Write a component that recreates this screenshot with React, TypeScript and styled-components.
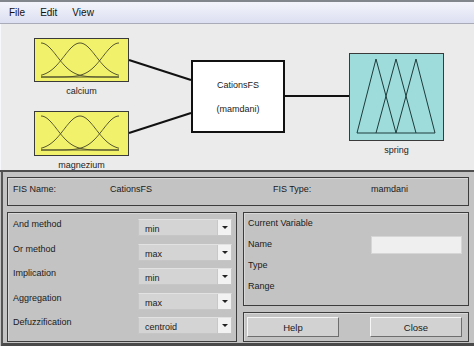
import React from 'react'
import styled, { createGlobalStyle } from 'styled-components'

const GlobalStyle = createGlobalStyle`
  html, body {
    margin: 0;
    padding: 0;
    background: #c3c3c3;
  }
  body {
    font-family: "Liberation Sans", Arial, sans-serif;
    font-size: 9px;
    color: #1a1a1a;
  }
`

const Window = styled.div`
  width: 474px;
  height: 346px;
  display: flex;
  flex-direction: column;
  overflow: hidden;
`

const TopEdge = styled.div`
  height: 2px;
  background: #80868c;
`

const MenuBar = styled.div`
  height: 21px;
  display: flex;
  align-items: center;
  gap: 15px;
  padding-left: 9px;
  font-size: 10px;
  color: #111;
  background: linear-gradient(#f3f4fb, #dcdff1);
  border-bottom: 1px solid #a9acb8;
`

const Canvas = styled.div`
  position: relative;
  height: 146px;
  background: #ebebeb;
  border-left: 1px solid #f7f8fc;
`

const Wires = styled.svg`
  position: absolute;
  inset: 0;
`

const Node = styled.div<{ $x: number; $y: number }>`
  position: absolute;
  left: ${p => p.$x}px;
  top: ${p => p.$y}px;
  display: flex;
  flex-direction: column;
  align-items: center;
  gap: 4px;
`

const VarBox = styled.div<{ $w: number; $h: number; $bg: string }>`
  width: ${p => p.$w}px;
  height: ${p => p.$h}px;
  box-sizing: border-box;
  background: ${p => p.$bg};
  border: 1px solid #3a3a3a;
  display: flex;
`

const VarLabel = styled.span`
  line-height: 10px;
  color: #222;
`

const SystemBox = styled.div`
  position: absolute;
  left: 190px;
  top: 36px;
  width: 94px;
  height: 73px;
  box-sizing: border-box;
  background: #fff;
  border: 2px solid #111;
  display: flex;
  flex-direction: column;
  align-items: center;
  padding-top: 18px;
  gap: 14px;
  line-height: 10px;
`

const Divider = styled.div`
  height: 2px;
  background: #4e4e4e;
`

const Lower = styled.div`
  flex: 1;
  display: flex;
  flex-direction: column;
  gap: 6px;
  padding: 5px 5px 1px 4px;
  border-left: 2px solid #555;
  margin-left: 1px;
  border-bottom: 3px solid #4a4a4a;
  background: #c3c3c3;
  min-height: 0;
`

const Panel = styled.div`
  box-sizing: border-box;
  border: 1px solid #3c3c3c;
  box-shadow: inset 1px 1px 0 #d8d8d8;
`

const InfoPanel = styled(Panel)`
  height: 29px;
  display: grid;
  grid-template-columns: 97px 163px 98px 1fr;
  padding: 6px 0 0 5px;
  line-height: 11px;
`

const Row = styled.div`
  flex: 1;
  display: flex;
  gap: 6px;
  min-height: 0;
`

const MethodsPanel = styled(Panel)`
  width: 230px;
  display: flex;
  flex-direction: column;
  gap: 7.5px;
  padding: 6px 4px 0 5px;
`

const MethodRow = styled.div`
  height: 17px;
  display: flex;
  justify-content: space-between;
  align-items: flex-start;
`

const MethodLabel = styled.span`
  line-height: 11px;
`

const Select = styled.div`
  width: 94px;
  height: 17px;
  box-sizing: border-box;
  display: flex;
  background: #d4d4d4;
  border: 1px solid #c6c6c6;
  border-top-color: #e2e2e2;
`

const SelectValue = styled.span`
  flex: 1;
  padding: 4px 0 0 6px;
  line-height: 10px;
`

const SelectArrow = styled.span`
  width: 13px;
  display: flex;
  align-items: center;
  justify-content: center;
  background: #f2f2f2;
  border-left: 1px solid #c8c8c8;
  &::after {
    content: '';
    border-left: 3px solid transparent;
    border-right: 3px solid transparent;
    border-top: 3px solid #222;
  }
`

const RightColumn = styled.div`
  flex: 1;
  display: flex;
  flex-direction: column;
  gap: 6px;
`

const VariablePanel = styled(Panel)`
  flex: 1;
  display: flex;
  flex-direction: column;
  padding: 5px 6px 0 4px;
  gap: 10px;
`

const VarRow = styled.div`
  height: 11px;
  display: flex;
  justify-content: space-between;
  align-items: center;
  line-height: 11px;
`

const NameInput = styled.div`
  width: 91px;
  height: 18px;
  box-sizing: border-box;
  background: #efefef;
  border: 1px solid #d6d6d6;
`

const ButtonPanel = styled(Panel)`
  height: 30px;
  display: flex;
  justify-content: space-between;
  align-items: center;
  padding: 0 6px 0 3px;
`

const Button = styled.div`
  width: 92px;
  height: 20px;
  box-sizing: border-box;
  display: flex;
  align-items: center;
  justify-content: center;
  background: #d2d2d2;
  border: 1px solid #6e6e6e;
  border-top-color: #f6f6f6;
  border-left-color: #f6f6f6;
  font-size: 9.5px;
`

const gaussPoints = (c: number, s: number, x0: number, x1: number, top: number, bottom: number) => {
  const pts: string[] = []
  for (let x = x0; x <= x1; x += 1) {
    const y = bottom - (bottom - top) * Math.exp(-((x - c) ** 2) / (2 * s * s))
    pts.push(`${x},${y.toFixed(2)}`)
  }
  return pts.join(' ')
}

const GaussMF = () => (
  <svg width="93" height="43" viewBox="0 0 93 43">
    <g fill="none" stroke="#55552e" strokeWidth="1">
      <polyline points={gaussPoints(6, 16, 6, 84, 4, 38)} />
      <polyline points={gaussPoints(45, 16, 6, 84, 4, 38)} />
      <polyline points={gaussPoints(84, 16, 6, 84, 4, 38)} />
      <line x1="6" y1="38" x2="84" y2="38" />
    </g>
  </svg>
)

const TriMF = () => (
  <svg width="93" height="86" viewBox="0 0 93 86">
    <g fill="none" stroke="#1e3a3a" strokeWidth="1">
      <polyline points="7,79 26,5 46,79" />
      <polyline points="26,79 46,5 66,79" />
      <polyline points="46,79 66,5 85,79" />
      <line x1="7" y1="79" x2="85" y2="79" />
    </g>
  </svg>
)

const methods = [
  ['And method', 'min'],
  ['Or method', 'max'],
  ['Implication', 'min'],
  ['Aggregation', 'max'],
  ['Defuzzification', 'centroid'],
]

export default function App() {
  return (
    <Window>
      <GlobalStyle />
      <TopEdge />
      <MenuBar>
        <span>File</span>
        <span>Edit</span>
        <span>View</span>
      </MenuBar>
      <Canvas>
        <Wires width="474" height="146">
          <g stroke="#111" strokeWidth="2">
            <line x1="128" y1="36" x2="190" y2="56" />
            <line x1="128" y1="109" x2="190" y2="89" />
            <line x1="284" y1="72" x2="348" y2="72" />
          </g>
        </Wires>
        <Node $x={33} $y={14}>
          <VarBox $w={95} $h={44} $bg="#f1f16c"><GaussMF /></VarBox>
          <VarLabel>calcium</VarLabel>
        </Node>
        <Node $x={33} $y={87}>
          <VarBox $w={95} $h={45} $bg="#f1f16c"><GaussMF /></VarBox>
          <VarLabel>magnezium</VarLabel>
        </Node>
        <SystemBox>
          <span>CationsFS</span>
          <span>(mamdani)</span>
        </SystemBox>
        <Node $x={348} $y={29}>
          <VarBox $w={95} $h={88} $bg="#9edcdc"><TriMF /></VarBox>
          <VarLabel>spring</VarLabel>
        </Node>
      </Canvas>
      <Divider />
      <Lower>
        <InfoPanel>
          <span>FIS Name:</span>
          <span>CationsFS</span>
          <span>FIS Type:</span>
          <span>mamdani</span>
        </InfoPanel>
        <Row>
          <MethodsPanel>
            {methods.map(([label, value]) => (
              <MethodRow key={label}>
                <MethodLabel>{label}</MethodLabel>
                <Select>
                  <SelectValue>{value}</SelectValue>
                  <SelectArrow />
                </Select>
              </MethodRow>
            ))}
          </MethodsPanel>
          <RightColumn>
            <VariablePanel>
              <VarRow>Current Variable</VarRow>
              <VarRow>
                <span>Name</span>
                <NameInput />
              </VarRow>
              <VarRow>Type</VarRow>
              <VarRow>Range</VarRow>
            </VariablePanel>
            <ButtonPanel>
              <Button>Help</Button>
              <Button>Close</Button>
            </ButtonPanel>
          </RightColumn>
        </Row>
      </Lower>
    </Window>
  )
}
